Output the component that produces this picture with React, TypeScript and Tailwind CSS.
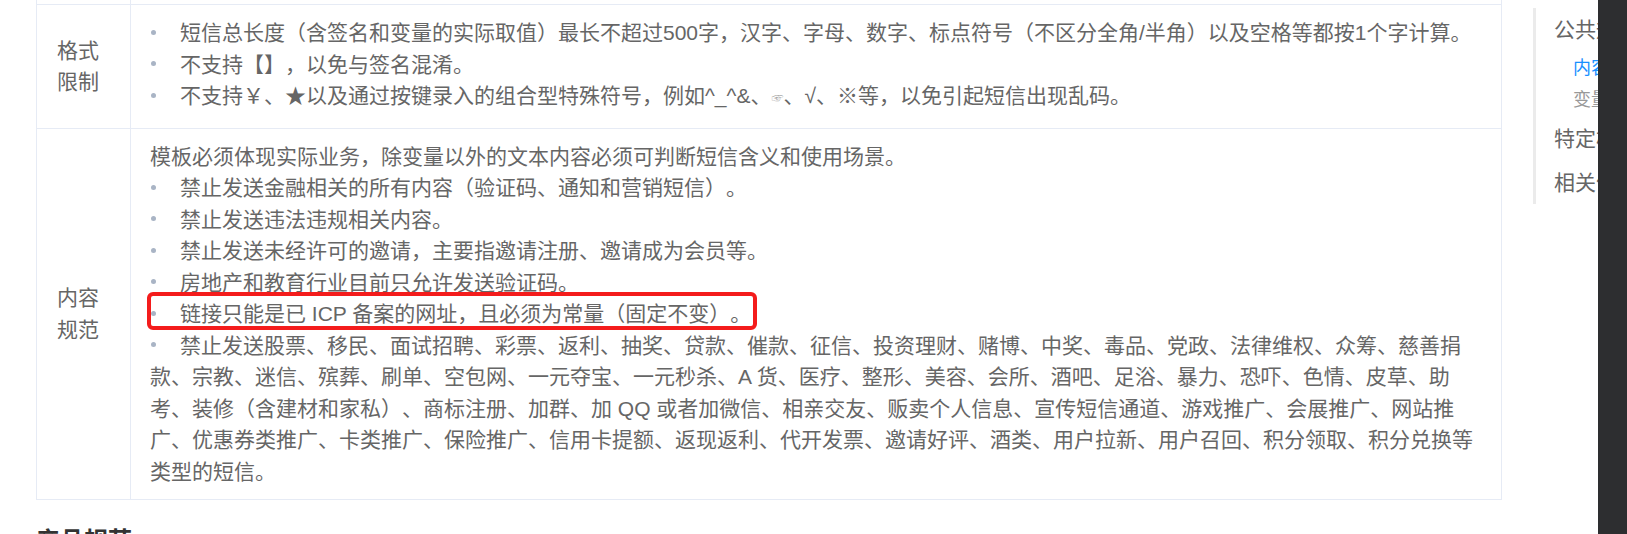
import React from "react";

function Dot() {
  return (
    <span className="inline-block w-[30px]">
      <span className="relative top-[-2px] ml-[1px] inline-block h-[5px] w-[5px] rounded-full bg-[#a9b4c5] align-middle" />
    </span>
  );
}

function Item({ children, boxed }: { children: React.ReactNode; boxed?: boolean }) {
  return (
    <li className="relative">
      <Dot />
      {children}
      {boxed && (
        <span className="pointer-events-none absolute left-[-3px] top-[-6px] h-[38px] w-[610px] rounded-[6px] border-[4px] border-[#f41c1c]" />
      )}
    </li>
  );
}

function Row({ label, children }: { label: string; children: React.ReactNode }) {
  return (
    <div className="grid grid-cols-[94px_1fr] border-t border-[#e6ebf5]">
      <div className="flex items-center border-r border-[#e6ebf5] pl-[20px] pr-[20px]">
        <span>{label}</span>
      </div>
      <div className="py-[12px] pl-[19px] pr-[20px]">{children}</div>
    </div>
  );
}

export default function App() {
  return (
    <div className="flex h-[534px] w-[1627px] overflow-hidden bg-white font-['Liberation_Sans','Noto_Sans_CJK_SC',sans-serif] text-[21px] leading-[31.5px] text-[#666] [text-spacing-trim:space-all]">
      <div className="flex min-w-0 flex-1">
        <main className="ml-[36px] w-[1466px] shrink-0">
          <div className="border-x border-b border-[#e6ebf5]">
            <div className="grid h-[4px] grid-cols-[94px_1fr]">
              <div className="border-r border-[#e6ebf5]" />
              <div />
            </div>
            <Row label="格式限制">
              <ul>
                <Item>
                  短信总长度（含签名和变量的实际取值）最长不超过500字，汉字、字母、数字、标点符号（不区分全角/半角）以及空格等都按1个字计算。
                </Item>
                <Item>不支持【】，以免与签名混淆。</Item>
                <Item>
                  不支持￥、★以及通过按键录入的组合型特殊符号，例如^_^&amp;、
                  <span className="text-[12px] text-[#aaa]">☞</span>、√、※等，以免引起短信出现乱码。
                </Item>
              </ul>
            </Row>
            <Row label="内容规范">
              <p>模板必须体现实际业务，除变量以外的文本内容必须可判断短信含义和使用场景。</p>
              <ul>
                <Item>禁止发送金融相关的所有内容（验证码、通知和营销短信）。</Item>
                <Item>禁止发送违法违规相关内容。</Item>
                <Item>禁止发送未经许可的邀请，主要指邀请注册、邀请成为会员等。</Item>
                <Item>房地产和教育行业目前只允许发送验证码。</Item>
                <Item boxed>链接只能是已 ICP 备案的网址，且必须为常量（固定不变）。</Item>
                <Item>
                  禁止发送股票、移民、面试招聘、彩票、返利、抽奖、贷款、催款、征信、投资理财、赌博、中奖、毒品、党政、法律维权、众筹、慈善捐款、宗教、迷信、殡葬、刷单、空包网、一元夺宝、一元秒杀、A 货、医疗、整形、美容、会所、酒吧、足浴、暴力、恐吓、色情、皮草、助考、装修（含建材和家私）、商标注册、加群、加 QQ 或者加微信、相亲交友、贩卖个人信息、宣传短信通道、游戏推广、会展推广、网站推广、优惠券类推广、卡类推广、保险推广、信用卡提额、返现返利、代开发票、邀请好评、酒类、用户拉新、用户召回、积分领取、积分兑换等类型的短信。
                </Item>
              </ul>
            </Row>
          </div>
          <h2 className="mt-[25px] text-[24px] font-bold leading-[32px] text-[#333]">产品规范</h2>
        </main>
        <nav className="ml-[31px] mt-[8px] h-[196px] w-[65px] shrink-0 overflow-hidden whitespace-nowrap border-l-[3px] border-[#ebebeb]">
          <div className="h-[44px] pl-[18px] leading-[44px] text-[#666]">公共规范</div>
          <div className="relative h-[32px] pl-[37px] text-[18px] leading-[32px] text-[#1890ff]">
            <span className="absolute left-[-3px] top-[5px] h-[22px] w-[3px] bg-[#1890ff]" />
            内容规范
          </div>
          <div className="h-[32px] pl-[37px] text-[18px] leading-[32px] text-[#999]">变量规范</div>
          <div className="h-[46px] pl-[18px] leading-[46px] text-[#666]">特定模板规范</div>
          <div className="h-[42px] pl-[18px] leading-[42px] text-[#666]">相关信息</div>
        </nav>
      </div>
      <div className="w-[29px] shrink-0 bg-[#2d2e30]" />
    </div>
  );
}
